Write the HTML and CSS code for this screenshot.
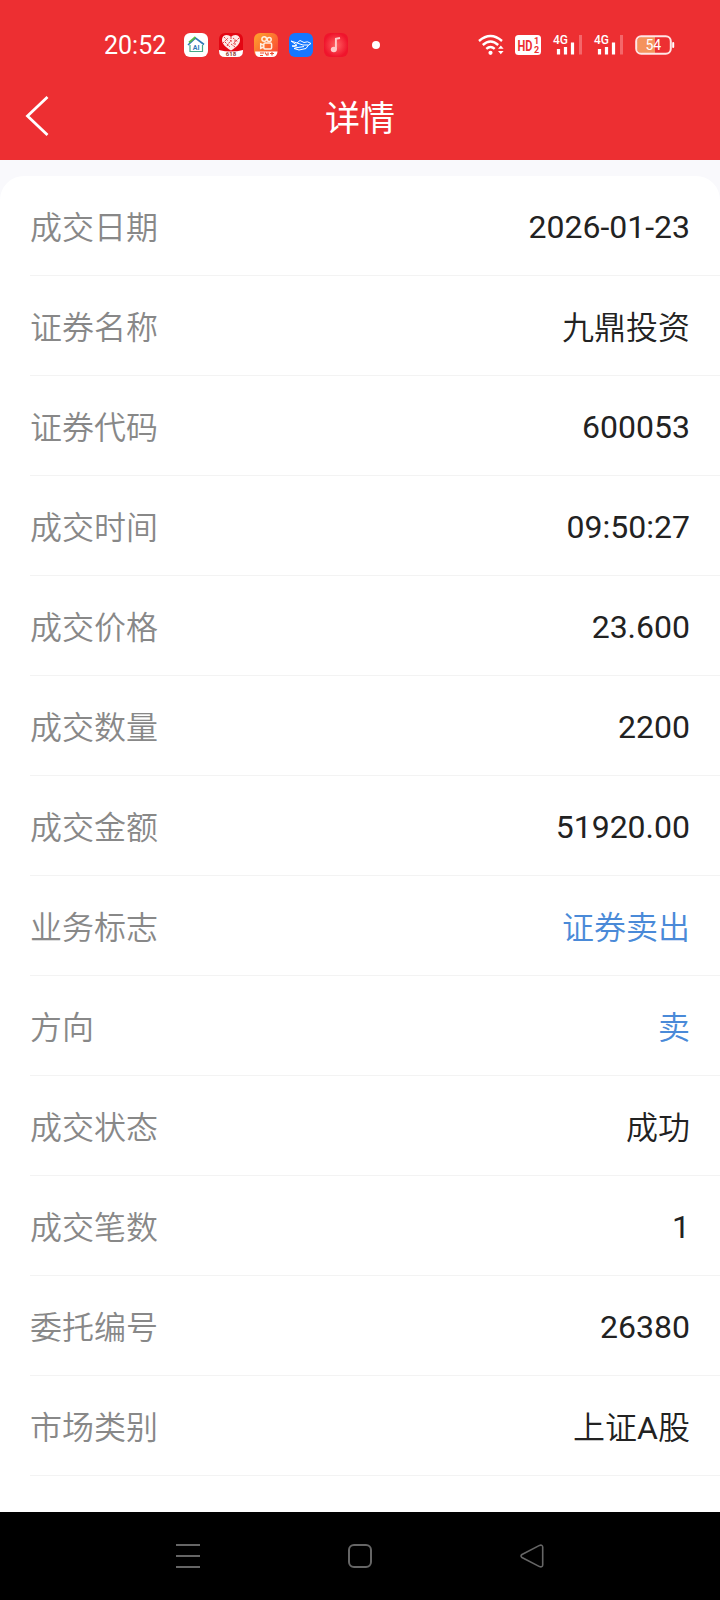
FILE: index.html
```html
<!DOCTYPE html>
<html lang="zh-CN">
<head>
    <meta charset="UTF-8">
    <meta name="viewport" content="width=device-width, initial-scale=1.0">
    <title>详情</title>
    <link rel="stylesheet" href="styles.css">
</head>
<body>
    <div class="page">
        <header class="header">
            <div class="status-bar">
                <div class="status-left">
                    <span class="time">20:52</span>
                    <svg width="24" height="24" viewBox="0 0 24 24">
                        <rect width="24" height="24" rx="6" fill="#fff"/>
                        <path d="M4 12 L11.5 5 L20 11.5" fill="none" stroke="#2f78b8" stroke-width="1.6"/>
                        <path d="M5 9.500 L11.500 4" stroke="#58b947" stroke-width="1.800"/>
                        <path d="M6 12 V18.500 H18.500 V12" fill="none" stroke="#45a888" stroke-width="1.2"/>
                        <text x="12.200" y="17" class="home-text">AI</text>
                    </svg>
                    <svg width="24" height="24" viewBox="0 0 24 24">
                        <rect width="24" height="24" rx="6" fill="#e30613"/>
                        <path d="M0 17 Q12 20 24 17 V18 Q24 24 18 24 H6 Q0 24 0 18 Z" fill="#fff"/>
                        <path d="M12 17.500 C6 14 2.800 10.500 3 6.500 C3.300 1.200 9.500 .8 12 4 C14.500 .8 20.700 1.200 21 6.500 C21.200 10.500 18 14 12 17.500 Z" fill="#ffe9e8"/>
                        <path d="M5 4 L9 8 M4 10 L9 5 M8 13 L12 7 M12 4 V9 M14 5 L19 9 M20 5 L14 11 M12 11 L16 14 M6 9 L11 14 M16 7 V12" stroke="#e03b42" stroke-width="1" stroke-dasharray="2 1"/>
                        <text x="12" y="23" class="tag-text">618</text>
                    </svg>
                    <svg width="24" height="24" viewBox="0 0 24 24">
                        <defs>
                            <linearGradient id="orange" x1="0" y1="0" x2="1" y2="1">
                                <stop offset="0" stop-color="#ffa52c"/>
                                <stop offset="1" stop-color="#f93f35"/>
                            </linearGradient>
                        </defs>
                        <rect width="24" height="24" rx="6" fill="url(#orange)"/>
                        <path d="M1 18.500 H23.500 Q23 24 18 24 H6 Q1.500 24 1 18.500 Z" fill="#fff"/>
                        <g fill="none" stroke="#ffefe2" stroke-width="1.500">
                            <circle cx="10.200" cy="6" r="2.300"/>
                            <circle cx="15.200" cy="6.500" r="2"/>
                            <rect x="9.800" y="10" width="7.800" height="6" rx="1.200"/>
                            <path d="M9.500 12 L6.700 10.800 V15.300 L9.500 14"/>
                        </g>
                        <path d="M6 20 H10 M6 22.500 H9 M11 19.500 L13 22.500 M14 19.500 V22.500 M16 20.500 H20 M18 19 V22.500" stroke="#ee4a2d" stroke-width="1.2"/>
                    </svg>
                    <svg width="24" height="24" viewBox="0 0 24 24">
                        <rect width="24" height="24" rx="6" fill="#1677ff"/>
                        <path d="M2 8 L8 10 L11 7.500 L15 9.500 L18.500 8.800 L22 10.500 L19.500 12 L17 15.500 L10 17 L5 15.500 L9 14.500 L3 13 L8 12.300 L2 8 M8 10 L14 12 L19.500 12 M9 14.500 L15 13.500" fill="none" stroke="#fff" stroke-width="1"/>
                    </svg>
                    <svg width="24" height="24" viewBox="0 0 24 24">
                        <defs>
                            <radialGradient id="music">
                                <stop offset="0" stop-color="#ff6262"/>
                                <stop offset="1" stop-color="#f0142c"/>
                            </radialGradient>
                        </defs>
                        <rect width="24" height="24" rx="6" fill="url(#music)"/>
                        <ellipse cx="9.800" cy="16.500" rx="3" ry="2.700" fill="#ffc9c9"/>
                        <path d="M11.900 16.500 V5.800 L16 5" fill="none" stroke="#ffc9c9" stroke-width="1.900"/>
                    </svg>
                    <span class="dot"></span>
                </div>
                <div class="status-right">
                    <svg width="27" height="22" viewBox="0 0 27 22">
                        <g fill="none" stroke="#fff" stroke-width="2.400">
                            <path d="M1 7 Q12.500 -3 24 7"/>
                            <path d="M4.800 11 Q12.500 4 20.200 11"/>
                            <path d="M8.300 14.800 Q12.500 11 16.700 14.800"/>
                        </g>
                        <circle cx="12.500" cy="18.800" r="2.100" fill="#fff"/>
                        <path d="M20 14.800 L22.800 11.500 L25.600 14.800 Z M20 17 L22.800 20.300 L25.600 17 Z" fill="#fff"/>
                    </svg>
                    <svg class="hd" width="26" height="20" viewBox="0 0 26 20">
                        <rect width="26" height="20" rx="3.500" fill="#fff"/>
                        <text x="2.500" y="15.500" class="hd-text" textLength="15" lengthAdjust="spacingAndGlyphs">HD</text>
                        <text x="19" y="9" class="hd-num">1</text>
                        <text x="19" y="17.500" class="hd-num">2</text>
                    </svg>
                    <svg class="signal" width="30" height="22" viewBox="0 0 30 22">
                        <text x="0" y="10" class="net" textLength="15" lengthAdjust="spacingAndGlyphs">4G</text>
                        <path d="M5.500 15 V20.500 M12.500 13 V20.500 M19.500 8.500 V20.500" stroke="#fff" stroke-width="3.200"/>
                        <path d="M27.500 1 V20.500" stroke="#f4676a" stroke-width="3"/>
                    </svg>
                    <svg class="signal" width="30" height="22" viewBox="0 0 30 22">
                        <text x="0" y="10" class="net" textLength="15" lengthAdjust="spacingAndGlyphs">4G</text>
                        <path d="M5.500 15 V20.500 M12.500 13 V20.500 M19.500 8.500 V20.500" stroke="#fff" stroke-width="3.200"/>
                        <path d="M27.500 1 V20.500" stroke="#f4676a" stroke-width="3"/>
                    </svg>
                    <svg class="battery" width="40" height="20" viewBox="0 0 40 20">
                        <path d="M20 2 H7 Q2 2 2 7 V13 Q2 18 7 18 H20 Z" fill="#f4935c"/>
                        <rect x="1.200" y="1.200" width="34.600" height="17.600" rx="5" fill="none" stroke="#ffe6e6" stroke-width="2"/>
                        <rect x="37.200" y="7" width="2" height="6" rx="1" fill="#fff"/>
                        <text x="18.300" y="14.900" class="battery-text">54</text>
                    </svg>
                </div>
            </div>
            <div class="nav-bar">
                <svg class="back" width="26" height="42" viewBox="0 0 26 42">
                    <path d="M22.500 2 L2.500 21 L22.500 40" fill="none" stroke="#fff" stroke-width="2.800"/>
                </svg>
                <h1>详情</h1>
            </div>
        </header>

        <main class="content">
            <div class="card">
                <div class="row"><span class="label">成交日期</span><span class="value num">2026-01-23</span></div>
                <div class="row"><span class="label">证券名称</span><span class="value">九鼎投资</span></div>
                <div class="row"><span class="label">证券代码</span><span class="value num">600053</span></div>
                <div class="row"><span class="label">成交时间</span><span class="value num">09:50:27</span></div>
                <div class="row"><span class="label">成交价格</span><span class="value num">23.600</span></div>
                <div class="row"><span class="label">成交数量</span><span class="value num">2200</span></div>
                <div class="row"><span class="label">成交金额</span><span class="value num">51920.00</span></div>
                <div class="row"><span class="label">业务标志</span><span class="value sell">证券卖出</span></div>
                <div class="row"><span class="label">方向</span><span class="value sell">卖</span></div>
                <div class="row"><span class="label">成交状态</span><span class="value">成功</span></div>
                <div class="row"><span class="label">成交笔数</span><span class="value num">1</span></div>
                <div class="row"><span class="label">委托编号</span><span class="value num">26380</span></div>
                <div class="row"><span class="label">市场类别</span><span class="value">上证<span class="latin">A</span>股</span></div>
            </div>
        </main>

        <footer class="system-nav">
            <svg width="24" height="24" viewBox="0 0 24 24">
                <path d="M0 1 H24 M0 12 H24 M0 23 H24"/>
            </svg>
            <svg width="24" height="24" viewBox="0 0 24 24">
                <rect x="1" y="1" width="22" height="22" rx="5"/>
            </svg>
            <svg width="24" height="24" viewBox="0 0 24 24">
                <path d="M2 10.500 L19.500 1.400 Q22.500 .5 22.700 3 V21 Q22.500 23.500 19.500 22.600 L2 13.500 Q0 12 2 10.500 Z" stroke-width="1.600"/>
            </svg>
        </footer>
    </div>
</body>
</html>
```
FILE: styles.css
```css
body {
    margin: 0;
    font-family: Roboto, "Noto Sans CJK SC", sans-serif;
    background-color: #fff;
}
.page {
    display: flex;
    flex-direction: column;
    height: 1600px;
    overflow: hidden;
}
.header {
    height: 160px;
    background-color: #ed2f32;
    color: #fff;
}
.status-bar {
    display: flex;
    justify-content: space-between;
    align-items: center;
    height: 90px;
    padding: 0 45px 0 104px;
    box-sizing: border-box;
}
.status-left {
    display: flex;
    align-items: center;
    gap: 11px;
}
.time {
    width: 69px;
    padding-top: 1px;
    font-size: 25px;
    line-height: 30px;
}
.dot {
    width: 8px;
    height: 8px;
    margin-left: 13px;
    border-radius: 50%;
    background-color: #fff;
}
.status-right {
    display: flex;
    align-items: center;
}
.hd {
    margin-left: 10px;
}
.signal {
    margin-left: 12px;
    overflow: visible;
}
.signal + .signal {
    margin-left: 11px;
}
.battery {
    margin-left: 11px;
}
.home-text {
    font-size: 7px;
    font-weight: bold;
    text-anchor: middle;
    fill: #2f78b8;
}
.tag-text {
    font-size: 6px;
    font-weight: bold;
    text-anchor: middle;
    fill: #8c3b32;
}
.hd-text {
    font-size: 15px;
    font-weight: bold;
    fill: #ed2f32;
}
.hd-num {
    font-size: 9px;
    font-weight: bold;
    fill: #ed2f32;
}
.net {
    font-size: 13px;
    font-weight: 500;
    fill: #fff;
}
.battery-text {
    font-size: 14px;
    text-anchor: middle;
    fill: #fff;
}
.nav-bar {
    display: grid;
    grid-template-columns: 60px 1fr 60px;
    align-items: center;
    height: 52px;
}
.back {
    margin-left: 25px;
}
h1 {
    margin: 0;
    padding-top: 8px;
    font-size: 35px;
    font-weight: 400;
    line-height: 44px;
    text-align: center;
}
.content {
    flex: 1;
    padding-top: 16px;
    background-color: #f9f9fc;
}
.card {
    height: 100%;
    box-sizing: border-box;
    padding-left: 30px;
    border-radius: 24px 24px 0 0;
    background-color: #fff;
}
.row {
    display: flex;
    justify-content: space-between;
    align-items: center;
    height: 100px;
    box-sizing: border-box;
    padding: 5px 30px 0 0;
    border-bottom: 1px solid #f3f3f3;
    font-size: 32px;
    font-weight: 350;
    line-height: 48px;
}
.label {
    color: #888;
}
.value {
    color: #222;
}
.num {
    padding-bottom: 3px;
    font-weight: 400;
}
.latin {
    font-weight: 400;
}
.sell {
    color: #4a8ad8;
}
.system-nav {
    display: flex;
    justify-content: center;
    align-items: center;
    gap: 148px;
    height: 88px;
    background-color: #000;
}
.system-nav svg {
    fill: none;
    stroke: #666;
    stroke-width: 2;
}
```
